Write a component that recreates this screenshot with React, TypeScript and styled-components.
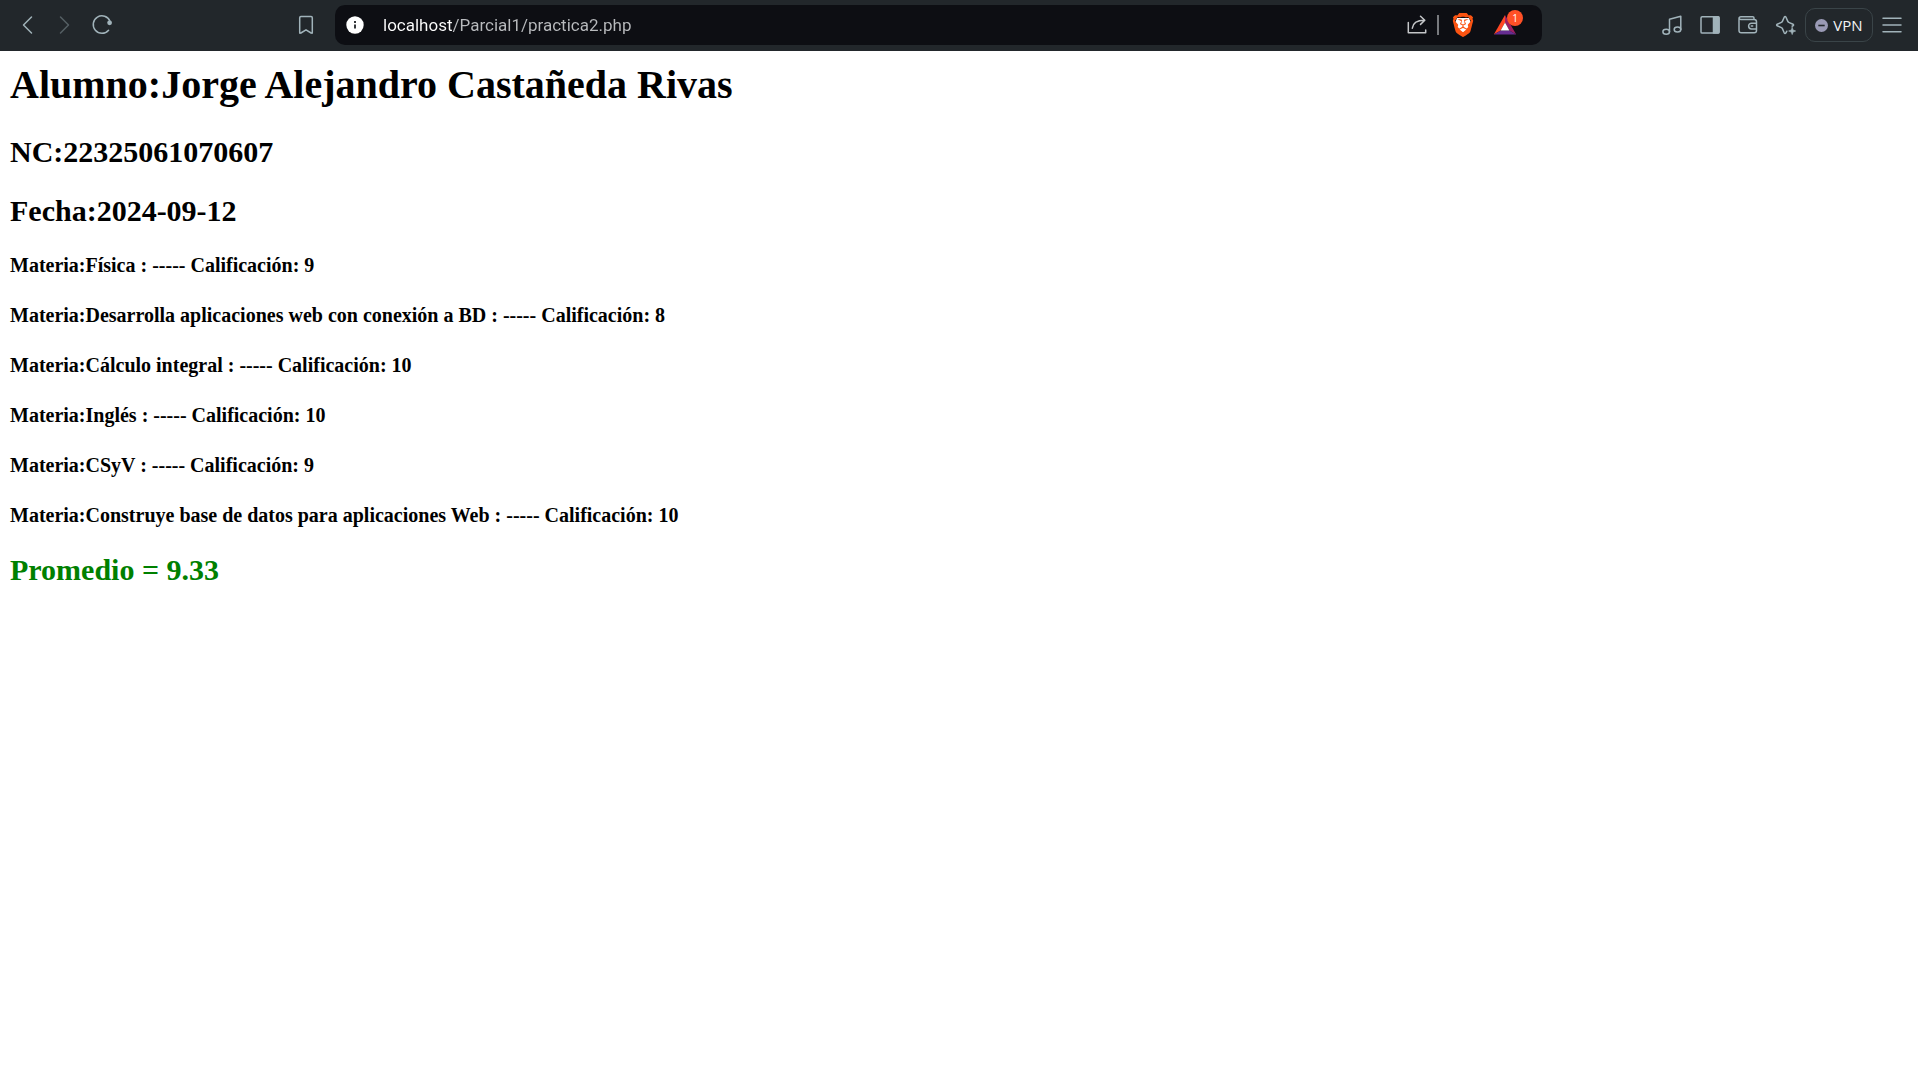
import React from "react";
import styled, { createGlobalStyle } from "styled-components";
import { SiBrave } from "react-icons/si";

const GlobalStyle = createGlobalStyle`
  *, *::before, *::after { box-sizing: border-box; }
  body { margin: 0; background: #fff; }
`;

const uiFont = `"Open Sans", "Noto Sans", sans-serif`;

const Toolbar = styled.header`
  display: grid;
  grid-template-columns: 335px minmax(0, 1fr) 376px;
  align-items: center;
  height: 51px;
  border-bottom: 1px solid #22272b;
  background: #22272b;
  color: #a1b3ba;
  font-family: ${uiFont};
`;

const NavGroup = styled.nav`
  display: flex;
  align-items: center;
  padding: 0 10px 0 8px;
`;

const Spacer = styled.div`
  flex: 1;
`;

const ActionGroup = styled.div`
  display: flex;
  align-items: center;
  justify-content: flex-end;
  padding-right: 7px;
`;

const IconButton = styled.button`
  display: flex;
  align-items: center;
  justify-content: center;
  flex: none;
  width: 38px;
  height: 38px;
  padding: 0;
  border: 0;
  background: none;
  color: inherit;
  &:disabled { color: #566065; }
`;

const StrokeIcon = styled.svg`
  display: block;
  width: 24px;
  height: 24px;
  fill: none;
  stroke: currentColor;
  stroke-width: 1.5;
  stroke-linecap: round;
  stroke-linejoin: round;
`;

const AddressBar = styled.form`
  display: flex;
  align-items: center;
  height: 40px;
  padding: 0 18px 0 1px;
  border-radius: 10px;
  background: #0d0e13;
  color: #c4c6c8;
`;

const InfoButton = styled(IconButton)`
  color: #fff;
`;

const AddressInput = styled.input`
  flex: 1;
  min-width: 0;
  height: 38px;
  padding: 0 0 0 9px;
  border: 0;
  outline: 0;
  background: linear-gradient(90deg, #fff 78px, #b9bbbe 78px);
  background-clip: text;
  color: transparent;
  caret-color: #fff;
  font: 400 17px/24px Roboto, ${uiFont};
`;

const Divider = styled.span`
  width: 2px;
  height: 20px;
  margin: 0 5px 0 1px;
  background: #77797d;
`;

const BraveMark = styled.span`
  display: grid;
  color: #fb5412;
  > svg { grid-area: 1 / 1; width: 24px; height: 24px; }
`;

const RewardsButton = styled(IconButton)`
  position: relative;
  margin-left: 4px;
`;

const Badge = styled.span`
  position: absolute;
  top: 4px;
  right: 1px;
  width: 16px;
  height: 16px;
  border-radius: 8px;
  background: #ff5026;
  color: #fff;
  font: 400 10px/16px ${uiFont};
  text-align: center;
`;

const VpnButton = styled.button`
  display: flex;
  align-items: center;
  justify-content: center;
  gap: 5px;
  width: 68px;
  height: 34px;
  padding: 0;
  border: 1px solid #3a4448;
  border-radius: 10px;
  background: none;
  color: #f2f4f5;
  font: 400 15px/20px ${uiFont};
`;

const Page = styled.main`
  padding: 10px;
  color: #000;
  font-family: "Liberation Serif", "Times New Roman", serif;
`;

const Student = styled.h1`
  margin: 0 0 27px;
  font-size: 40px;
  line-height: 47px;
`;

const Detail = styled.h2<{ $tone?: string }>`
  margin: 0 0 25px;
  color: ${(p) => p.$tone ?? "inherit"};
  font-size: 30px;
  line-height: 34px;
`;

const Subject = styled.h4`
  margin: 0 0 26px;
  font-size: 20px;
  line-height: 24px;
`;

const grades = [
  { name: "Física", grade: 9 },
  { name: "Desarrolla aplicaciones web con conexión a BD", grade: 8 },
  { name: "Cálculo integral", grade: 10 },
  { name: "Inglés", grade: 10 },
  { name: "CSyV", grade: 9 },
  { name: "Construye base de datos para aplicaciones Web", grade: 10 },
];

function Icon({ children }: { children: React.ReactNode }) {
  return (
    <StrokeIcon viewBox="0 0 24 24" aria-hidden="true">
      {children}
    </StrokeIcon>
  );
}

function BrowserBar() {
  return (
    <Toolbar>
      <NavGroup aria-label="Navegación">
        <IconButton type="button" aria-label="Atrás">
          <Icon><path d="M16.5 4 8.5 12l8 8" /></Icon>
        </IconButton>
        <IconButton type="button" aria-label="Adelante" disabled>
          <Icon><path d="m7.5 4 8 8-8 8" /></Icon>
        </IconButton>
        <IconButton type="button" aria-label="Recargar">
          <Icon>
            <path d="M17.6 17.2A8.7 8.7 0 1 1 19 8.3" />
            <circle cx="18.6" cy="9.8" r="2.4" fill="currentColor" stroke="none" />
          </Icon>
        </IconButton>
        <Spacer />
        <IconButton type="button" aria-label="Marcador">
          <Icon><path d="M6.9 3.5h10.2q1.2 0 1.2 1.2v14.7q0 1.4-1.2.6L12 16.8 6.9 20q-1.2.8-1.2-.6V4.7q0-1.2 1.2-1.2Z" /></Icon>
        </IconButton>
      </NavGroup>

      <AddressBar onSubmit={(e) => e.preventDefault()}>
        <InfoButton type="button" aria-label="Información del sitio">
          <Icon>
            <circle cx="12" cy="12" r="8.7" fill="currentColor" stroke="none" />
            <path d="M12 11.4v4.2" stroke="#34363a" strokeWidth="2" strokeLinecap="butt" />
            <path d="M12 8v2" stroke="#34363a" strokeWidth="2" strokeLinecap="butt" />
          </Icon>
        </InfoButton>
        <AddressInput aria-label="Dirección" defaultValue="localhost/Parcial1/practica2.php" spellCheck={false} />
        <IconButton type="button" aria-label="Compartir">
          <Icon>
            <path d="M3.3 9.5v10.3h17.4V17M7.3 15.3C7.8 10 11 7.2 19.5 7.2M15.5 3.2l4.3 4-4.3 4.2" />
          </Icon>
        </IconButton>
        <Divider />
        <IconButton type="button" aria-label="Brave Shields">
          <BraveMark>
            <svg viewBox="0 0 24 24" aria-hidden="true">
              <path d="M6 5h12l2 5-3 8-5 4-5-4-3-8Z" fill="#fff" />
            </svg>
            <SiBrave aria-hidden="true" />
          </BraveMark>
        </IconButton>
        <RewardsButton type="button" aria-label="Brave Rewards">
          <svg width="24" height="24" viewBox="0 0 24 24" aria-hidden="true">
            <path d="M12 2 .8 21.5 7.6 17.5 12 9.6Z" fill="#ff4724" />
            <path d="m12 2 11.2 19.5-6.8-4L12 9.6Z" fill="#9e1f63" />
            <path d="M.8 21.5h22.4l-6.8-4H7.6Z" fill="#662d91" />
            <path d="m12 9.6 4.4 7.9H7.6Z" fill="#fff" />
          </svg>
          <Badge>1</Badge>
        </RewardsButton>
      </AddressBar>

      <ActionGroup>
        <IconButton type="button" aria-label="Música">
          <Icon>
            <ellipse cx="6.2" cy="18.8" rx="3.3" ry="2.5" />
            <ellipse cx="17.5" cy="16.5" rx="3.3" ry="2.5" />
            <path d="M9.5 18.8V6.2l11.3-3v13.3" />
          </Icon>
        </IconButton>
        <IconButton type="button" aria-label="Panel lateral">
          <Icon>
            <rect x="3" y="3.7" width="18" height="16.4" rx="1.2" />
            <path d="M15.5 3.7H20q1 0 1 1v14.4q0 1-1 1h-4.5Z" fill="currentColor" />
          </Icon>
        </IconButton>
        <IconButton type="button" aria-label="Cartera">
          <Icon>
            <path d="M18 6.5V5q0-1.3-1.3-1.3H5Q3 3.7 3 5.5v12q0 2.3 2.3 2.3h12.9q2.3 0 2.3-2.3V8.8q0-2.3-2.3-2.3H5Q3 6.5 3 5M20.5 10.2h-5a2.9 2.9 0 0 0 0 5.8h5M15.3 13.1h1.4" />
          </Icon>
        </IconButton>
        <IconButton type="button" aria-label="Leo AI">
          <Icon>
            <path d="M12.8 18.2 12 19.8q-1 1.2-1.8 0l-1.8-4.2q-.3-.7-1-1l-4.2-1.8q-1.2-.8 0-1.6l4.2-1.8q.7-.3 1-1l1.8-4.2q.9-1.2 1.8 0l1.8 4.2q.3.7 1 1l4.2 1.8q1.2.8 0 1.6l-.9.4" />
            <path d="m18.2 14.4.9 2.6 2.6 1-2.6 1-.9 2.6-1-2.6-2.6-1 2.6-1Z" fill="currentColor" strokeWidth="0.6" />
          </Icon>
        </IconButton>
        <VpnButton type="button">
          <svg width="13" height="13" viewBox="0 0 13 13" aria-hidden="true">
            <circle cx="6.5" cy="6.5" r="6.5" fill="#9a9ab5" />
            <path d="M3.3 6.5h6.4" stroke="#22272b" strokeWidth="1.6" />
          </svg>
          VPN
        </VpnButton>
        <IconButton type="button" aria-label="Menú">
          <Icon><path d="M3 5.3h18M3 12h18M3 18.8h18" /></Icon>
        </IconButton>
      </ActionGroup>
    </Toolbar>
  );
}

export default function App() {
  const average = grades.reduce((sum, g) => sum + g.grade, 0) / grades.length;
  return (
    <>
      <GlobalStyle />
      <BrowserBar />
      <Page>
        <Student>Alumno:Jorge Alejandro Castañeda Rivas</Student>
        <Detail>NC:22325061070607</Detail>
        <Detail>Fecha:2024-09-12</Detail>
        {grades.map((g) => (
          <Subject key={g.name}>{`Materia:${g.name} : ----- Calificación: ${g.grade}`}</Subject>
        ))}
        <Detail $tone="#008000">{`Promedio = ${average.toFixed(2)}`}</Detail>
      </Page>
    </>
  );
}
